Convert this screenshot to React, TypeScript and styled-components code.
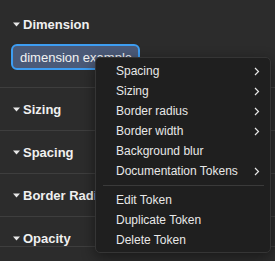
import React from "react";
import styled, { createGlobalStyle } from "styled-components";

const GlobalStyle = createGlobalStyle`
  html, body {
    margin: 0;
    padding: 0;
    background: #2c2c2c;
    font-family: "Liberation Sans", Arial, sans-serif;
  }
`;

interface MenuEntry {
  label: string;
  submenu?: boolean;
}

const typeItems: MenuEntry[] = [
  { label: "Spacing", submenu: true },
  { label: "Sizing", submenu: true },
  { label: "Border radius", submenu: true },
  { label: "Border width", submenu: true },
  { label: "Background blur" },
  { label: "Documentation Tokens", submenu: true },
];

const actionItems: MenuEntry[] = [
  { label: "Edit Token" },
  { label: "Duplicate Token" },
  { label: "Delete Token" },
];

const collapsed = ["Sizing", "Spacing", "Border Radius", "Opacity"];

const Caret = () => (
  <svg width="7" height="5" viewBox="0 0 7 5">
    <path d="M0 0.5 H7 L3.5 4.5 Z" fill="#e8e8e8" />
  </svg>
);

const Chevron = () => (
  <svg width="6" height="9" viewBox="0 0 6 9">
    <path d="M1 1 L4.5 4.5 L1 8" fill="none" stroke="#e6e6e6" strokeWidth="1.2" />
  </svg>
);

const App = () => {
  return (
    <Page>
      <GlobalStyle />
      <Section>
        <Header>
          <Caret />
          <HeaderLabel>Dimension</HeaderLabel>
        </Header>
        <TokenList>
          <TokenChip>dimension example</TokenChip>
        </TokenList>
      </Section>
      {collapsed.map((name, i) => (
        <Section key={name} $collapsed $last={i === collapsed.length - 1}>
          <Header>
            <Caret />
            <HeaderLabel>{name}</HeaderLabel>
          </Header>
        </Section>
      ))}
      <ContextMenu>
        {typeItems.map((item) => (
          <MenuItem key={item.label}>
            <span>{item.label}</span>
            {item.submenu && <Chevron />}
          </MenuItem>
        ))}
        <Separator />
        {actionItems.map((item) => (
          <MenuItem key={item.label}>
            <span>{item.label}</span>
          </MenuItem>
        ))}
      </ContextMenu>
    </Page>
  );
};

const Page = styled.div`
  position: relative;
  width: 275px;
  height: 261px;
  overflow: hidden;
  background: #2c2c2c;
`;

const Section = styled.div<{ $collapsed?: boolean; $last?: boolean }>`
  padding: ${(p) => (p.$collapsed ? "13px" : "16px")} 12px
    ${(p) => (p.$last ? "0px" : p.$collapsed ? "13px" : "17px")} 13px;
  border-bottom: 1px solid #3e3e3e;
`;

const Header = styled.div`
  display: flex;
  align-items: center;
  gap: 3px;
  height: 16px;
`;

const HeaderLabel = styled.span`
  color: #f0f0f0;
  font-size: 13px;
  font-weight: 700;
  white-space: nowrap;
`;

const TokenList = styled.div`
  display: flex;
  margin-top: 12px;
  margin-left: -2px;
`;

const TokenChip = styled.div`
  box-sizing: border-box;
  height: 26px;
  padding: 0 6px 0 7px;
  display: flex;
  align-items: center;
  border: 2px solid #3d9df2;
  border-radius: 6px;
  background: #4b5a78;
  color: #f2f2f2;
  font-size: 13px;
  white-space: nowrap;
`;

const ContextMenu = styled.div`
  position: absolute;
  left: 95px;
  top: 57px;
  width: 176px;
  box-sizing: border-box;
  padding: 3px 0 2px;
  background: #1f1f1f;
  border: 1px solid #353535;
  border-radius: 5px;
  box-shadow: 0 4px 14px rgba(0, 0, 0, 0.45);
`;

const MenuItem = styled.div`
  display: flex;
  align-items: center;
  justify-content: space-between;
  height: 20px;
  padding: 0 10px 0 20px;
  color: #e8e8e8;
  font-size: 12px;
  white-space: nowrap;
`;

const Separator = styled.div`
  height: 1px;
  margin: 4px 6px 4px 7px;
  background: #3a3a3a;
`;

export default App;
